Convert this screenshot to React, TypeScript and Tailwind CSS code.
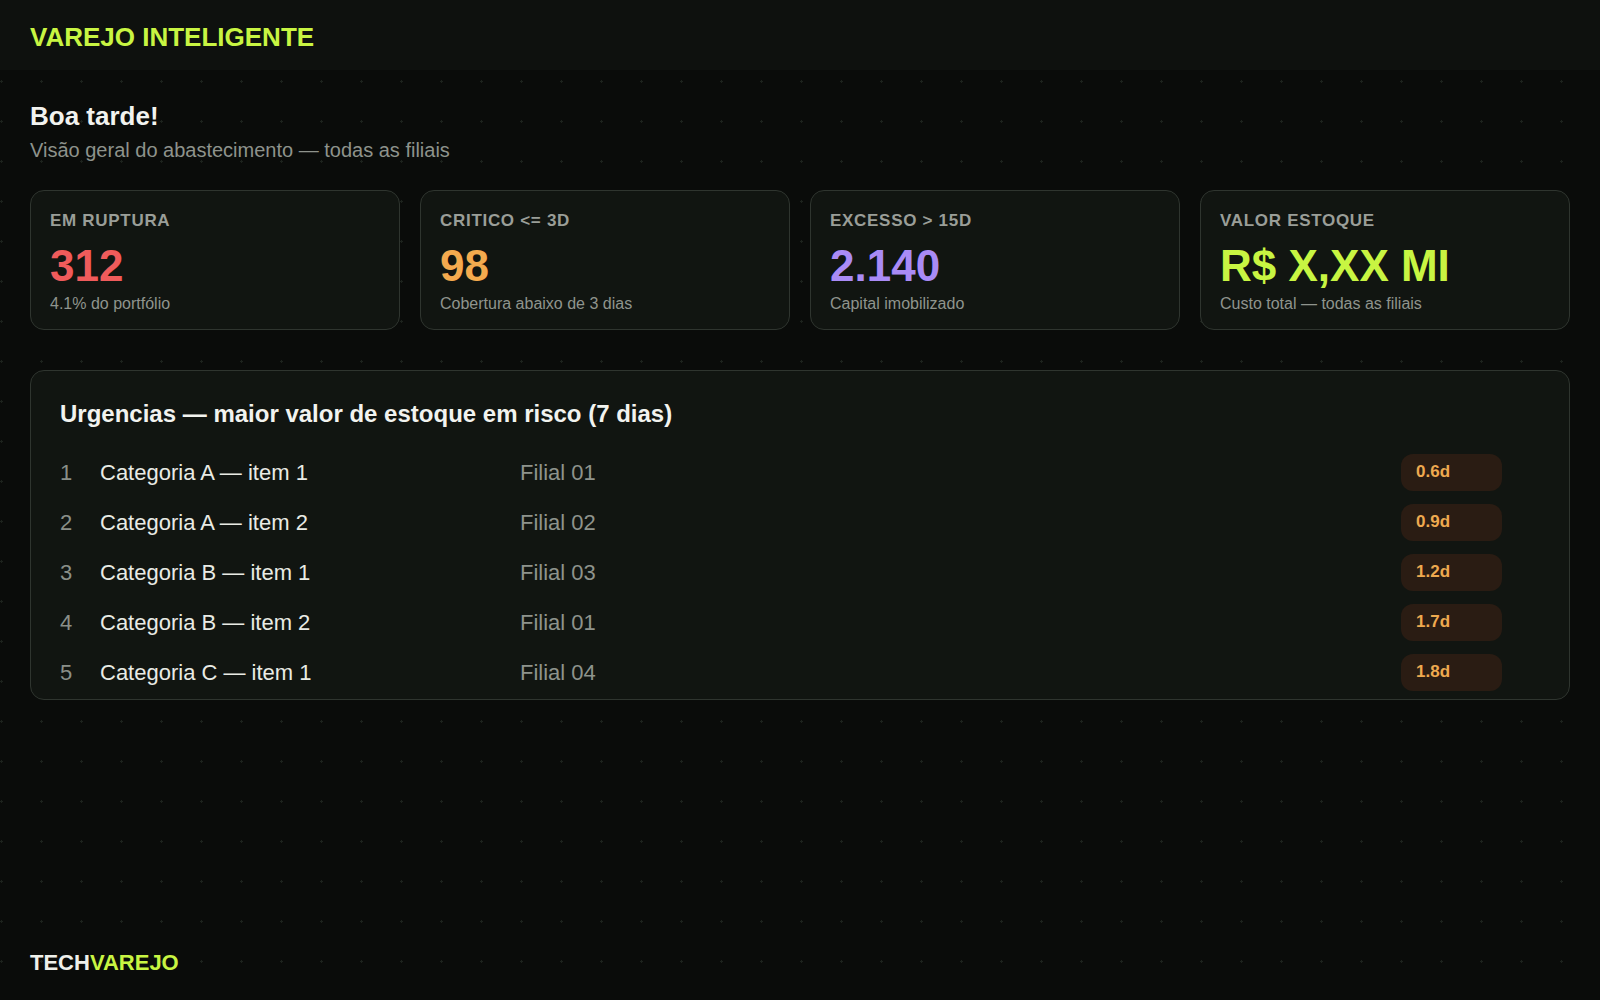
const kpis = [
  { label: "EM RUPTURA", value: "312", color: "text-[#ef5b5b]", note: "4.1% do portfólio" },
  { label: "CRITICO <= 3D", value: "98", color: "text-[#f4aa4e]", note: "Cobertura abaixo de 3 dias" },
  { label: "EXCESSO > 15D", value: "2.140", color: "text-[#a98bf6]", note: "Capital imobilizado" },
  { label: "VALOR ESTOQUE", value: "R$ X,XX MI", color: "text-[#c8f542]", note: "Custo total — todas as filiais" },
];

const urgencias = [
  { item: "Categoria A — item 1", filial: "Filial 01", dias: "0.6d" },
  { item: "Categoria A — item 2", filial: "Filial 02", dias: "0.9d" },
  { item: "Categoria B — item 1", filial: "Filial 03", dias: "1.2d" },
  { item: "Categoria B — item 2", filial: "Filial 01", dias: "1.7d" },
  { item: "Categoria C — item 1", filial: "Filial 04", dias: "1.8d" },
];

function DotGrid() {
  return (
    <svg className="absolute inset-0 w-full h-full pointer-events-none" aria-hidden>
      <defs>
        <pattern id="dots" width="40" height="40" patternUnits="userSpaceOnUse">
          <rect x="0" y="1" width="3" height="1" fill="#1d231d" />
          <rect x="1" y="0" width="1" height="3" fill="#1d231d" />
        </pattern>
      </defs>
      <rect width="100%" height="100%" fill="url(#dots)" />
    </svg>
  );
}

export default function App() {
  return (
    <div className="relative min-h-screen flex flex-col bg-[#0a0c0a] font-['Liberation_Sans',Arial,sans-serif] overflow-hidden">
      <DotGrid />

      <header className="relative h-[70px] flex items-center px-[30px] pt-[4px] bg-[#0e110e]">
        <h1 className="text-[26px] font-bold text-[#c8f542]">VAREJO INTELIGENTE</h1>
      </header>

      <main className="relative px-[30px] pt-[30px]">
        <h2 className="text-[26px] leading-[32px] font-bold text-[#f2f3ef]">Boa tarde!</h2>
        <p className="mt-[6px] text-[20px] leading-[24px] text-[#8e938c]">
          Visão geral do abastecimento — todas as filiais
        </p>

        <div className="mt-[28px] grid grid-cols-4 gap-[20px]">
          {kpis.map((k) => (
            <div
              key={k.label}
              className="h-[140px] rounded-[14px] border border-[#2f352f] bg-[#111511] px-[19px] pt-[20px]"
            >
              <div className="text-[17px] leading-[20px] font-bold tracking-[0.7px] text-[#9a9e98]">{k.label}</div>
              <div className={`mt-[10px] text-[44px] leading-[50px] font-bold ${k.color}`}>{k.value}</div>
              <div className="mt-[3px] text-[16px] leading-[20px] text-[#8f948d]">{k.note}</div>
            </div>
          ))}
        </div>

        <section className="mt-[40px] h-[330px] overflow-hidden rounded-[14px] border border-[#2f352f] bg-[#111511] pl-[29px] pr-[28px] pt-[29px]">
          <h3 className="text-[24px] leading-[28px] font-bold text-[#f2f3ef] mb-[19px]">
            Urgencias — maior valor de estoque em risco (7 dias)
          </h3>
          {urgencias.map((u, i) => (
            <div key={i} className="grid grid-cols-[40px_420px_1fr_140px] items-center h-[50px] text-[22px]">
              <span className="text-[#8a8f88]">{i + 1}</span>
              <span className="text-[#e9ebe5]">{u.item}</span>
              <span className="text-[#8e938c]">{u.filial}</span>
              <span className="w-[101px] h-[37px] rounded-[12px] bg-[#2a1c13] pl-[15px] pt-[7px] text-[17px] leading-[22px] font-bold text-[#eea94f]">
                {u.dias}
              </span>
            </div>
          ))}
        </section>
      </main>

      <footer className="relative mt-auto px-[30px] pb-[23px]">
        <span className="text-[22px] leading-[26px] font-bold text-[#eef0ea]">
          TECH<span className="text-[#c8f542]">VAREJO</span>
        </span>
      </footer>
    </div>
  );
}
